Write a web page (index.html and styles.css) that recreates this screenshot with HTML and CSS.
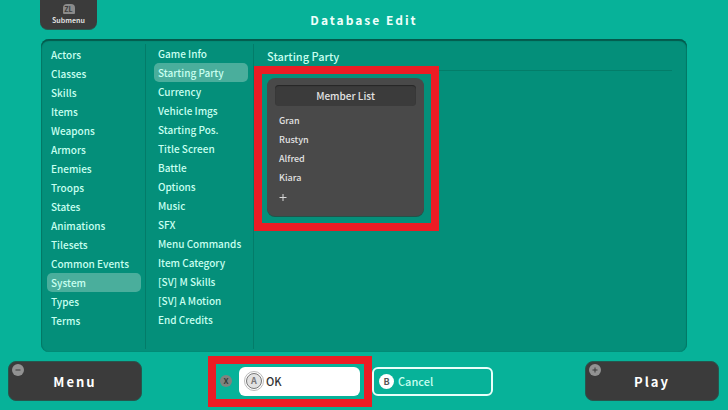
FILE: index.html
```html
<!DOCTYPE html>
<html lang="en">
<head>
<meta charset="utf-8">
<meta name="viewport" content="width=device-width, initial-scale=1">
<title>Database Edit</title>
<link rel="stylesheet" href="styles.css">
</head>
<body>
<header class="top">
  <button class="submenu" type="button"><span class="trigger">ZL</span><span>Submenu</span></button>
  <h1 class="title">Database Edit</h1>
</header>
<main class="panel">
  <nav class="list categories" aria-label="Categories">
    <a href="#">Actors</a>
    <a href="#">Classes</a>
    <a href="#">Skills</a>
    <a href="#">Items</a>
    <a href="#">Weapons</a>
    <a href="#">Armors</a>
    <a href="#">Enemies</a>
    <a href="#">Troops</a>
    <a href="#">States</a>
    <a href="#">Animations</a>
    <a href="#">Tilesets</a>
    <a href="#">Common Events</a>
    <a href="#" class="selected" aria-current="true">System</a>
    <a href="#">Types</a>
    <a href="#">Terms</a>
  </nav>
  <nav class="list sections" aria-label="System sections">
    <a href="#">Game Info</a>
    <a href="#" class="selected" aria-current="true">Starting Party</a>
    <a href="#">Currency</a>
    <a href="#">Vehicle Imgs</a>
    <a href="#">Starting Pos.</a>
    <a href="#">Title Screen</a>
    <a href="#">Battle</a>
    <a href="#">Options</a>
    <a href="#">Music</a>
    <a href="#">SFX</a>
    <a href="#">Menu Commands</a>
    <a href="#">Item Category</a>
    <a href="#">[SV] M Skills</a>
    <a href="#">[SV] A Motion</a>
    <a href="#">End Credits</a>
  </nav>
  <section class="detail">
    <h2 class="heading">Starting Party</h2>
    <div class="card">
      <h3 class="card-title">Member List</h3>
      <button type="button">Gran</button>
      <button type="button">Rustyn</button>
      <button type="button">Alfred</button>
      <button type="button">Kiara</button>
      <button type="button" aria-label="Add member"><svg class="plus" viewBox="0 0 8 8"><path d="M4 1v7M0.500 4.500h7"/></svg></button>
      <div class="highlight"></div>
    </div>
  </section>
</main>
<footer class="bottom">
  <button class="big" type="button">
    <svg class="badge" viewBox="0 0 12 12"><circle cx="6" cy="6" r="6"/><path d="M3.500 6h5"/></svg>Menu
  </button>
  <div class="actions">
    <span class="key-x">X</span>
    <button class="action ok" type="button"><span class="key key-a">A</span>OK</button>
    <button class="action cancel" type="button"><span class="key key-b">B</span>Cancel</button>
    <div class="highlight"></div>
  </div>
  <button class="big" type="button">
    <svg class="badge" viewBox="0 0 12 12"><circle cx="6" cy="6" r="6"/><path d="M3.500 6h5M6 3.500v5"/></svg>Play
  </button>
</footer>
</body>
</html>
```
FILE: styles.css
```css
* {
  box-sizing: border-box;
}

body {
  margin: 0;
  min-height: 100vh;
  display: grid;
  grid-template-rows: auto 1fr auto;
  background: #07b299;
  color: #c8fff0;
  font: 500 10px/19px "Noto Sans CJK JP", "Noto Sans", sans-serif;
}

h1, h2, h3 {
  margin: 0;
  font-weight: inherit;
}

button {
  margin: 0;
  padding: 0;
  border: 0;
  background: none;
  color: inherit;
  font: inherit;
}

a {
  color: inherit;
  text-decoration: none;
}

.top {
  display: grid;
  grid-template-columns: 1fr auto 1fr;
  align-items: center;
  height: 39px;
  padding: 0 40px;
}

.submenu {
  align-self: start;
  display: flex;
  flex-direction: column;
  align-items: center;
  width: 57px;
  height: 30px;
  padding-top: 4px;
  border-bottom: 1px solid #285a50;
  border-radius: 0 0 8px 8px;
  background: #3b3b3b;
  color: #dedede;
  font-size: 7px;
  font-weight: 700;
  line-height: 13px;
}

.trigger {
  width: 12px;
  height: 10px;
  border-radius: 4px 4px 1px 1px;
  background: #8b8b8b;
  color: #3b3b3b;
  line-height: 10px;
}

.title {
  color: #effffb;
  font-size: 12px;
  font-weight: 700;
  letter-spacing: 2px;
}

.panel {
  display: grid;
  grid-template-columns: 105px 108px 1fr;
  margin: 0 41px;
  border-radius: 8px;
  background: #048f7a;
  box-shadow: inset 0 2px 1px #04594c, inset 1px 0 1px #047c69, inset -1px 0 1px #047c69;
}

.list {
  display: flex;
  flex-direction: column;
  margin: 5px 0 3px;
  border-right: 1px solid #037c69;
}

.list a {
  padding: 0 4px;
  border-radius: 5px;
  white-space: nowrap;
}

.list .selected {
  background: #4aae9c;
}

.categories {
  padding: 1px 4px 0 6px;
}

.sections {
  padding: 0 5px 0 8px;
}

.detail {
  padding: 5px 15px 0 13px;
}

.heading {
  height: 27px;
  margin-bottom: 7px;
  border-bottom: 1px solid #047d69;
  font-size: 11px;
  line-height: 25px;
}

.card {
  position: relative;
  display: flex;
  flex-direction: column;
  width: 157px;
  padding: 7px 8px 10px;
  border-radius: 8px;
  background: #494949;
  box-shadow: 0 1px 0 #205349;
  color: #e2e2e2;
  font-size: 9px;
}

.card-title {
  height: 21px;
  margin-bottom: 5px;
  border-radius: 4px;
  background: #3b3b3b;
  box-shadow: inset 0 1px 1px #262626;
  font-size: 10px;
  line-height: 21px;
  text-align: center;
}

.card button {
  height: 19px;
  padding: 0 4px;
  text-align: left;
}

.plus {
  display: block;
  width: 8px;
  height: 8px;
  fill: none;
  stroke: #d8d8d8;
}

.highlight {
  position: absolute;
  border: 8px solid #ec1c24;
  pointer-events: none;
}

.card .highlight {
  inset: -12px -15px -15px -13px;
}

.bottom {
  display: grid;
  grid-template-columns: 134px 1fr 134px;
  align-items: center;
  height: 58px;
  padding: 0 9px 0 8px;
}

.big {
  position: relative;
  height: 40px;
  border: 1px solid #27564d;
  border-radius: 8px;
  background: #3b3b3b;
  color: #fff;
  font-size: 13px;
  font-weight: 700;
  letter-spacing: 2px;
}

.badge {
  position: absolute;
  top: 2px;
  left: 3px;
  width: 12px;
  height: 12px;
  fill: #929292;
  stroke: #3b3b3b;
}

.badge circle {
  stroke: none;
}

.actions {
  position: relative;
  display: flex;
  align-items: center;
  justify-self: center;
  margin-right: 14px;
  font-size: 11px;
}

.key-x {
  width: 12px;
  height: 12px;
  margin-right: 7px;
  border-radius: 50%;
  background: #80837f;
  color: #303c39;
  font-size: 8px;
  font-weight: 700;
  line-height: 12px;
  text-align: center;
}

.action {
  display: flex;
  align-items: center;
  gap: 4px;
  width: 121px;
  height: 29px;
  border-radius: 6px;
}

.ok {
  margin-right: 12px;
  padding-left: 7px;
  background: #fff;
  color: #333;
}

.cancel {
  padding-left: 5px;
  border: 2px solid #e9fffa;
}

.key {
  flex: none;
  width: 15px;
  height: 15px;
  border-radius: 50%;
  background: #fff;
  color: #555;
  font-size: 9px;
  font-weight: 700;
  line-height: 15px;
  text-align: center;
}

.key-a {
  width: 16px;
  height: 16px;
  border: 1px solid #777;
  outline: 1px solid #bbb;
  outline-offset: 1px;
  background: #e2e2e2;
  color: #777;
  line-height: 14px;
}

.actions .highlight {
  inset: -11px 121px -11px -12px;
}
```
